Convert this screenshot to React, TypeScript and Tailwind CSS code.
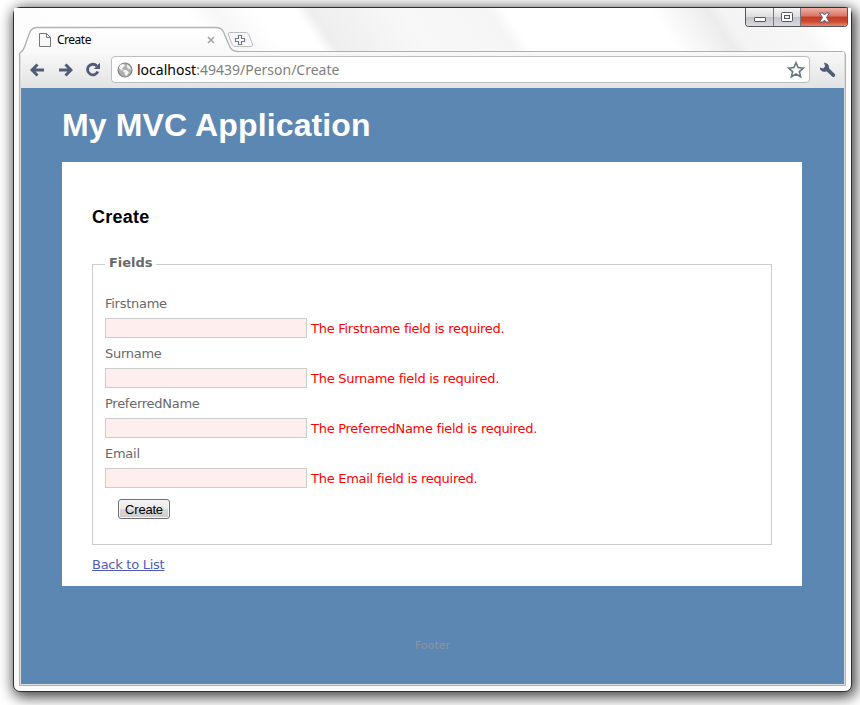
import React from "react";

const names = ["Firstname", "Surname", "PreferredName", "Email"];

function TitleBar() {
  return (
    <div className="flex h-[43px] items-start bg-[linear-gradient(56deg,#fdfdfd_0px,#fff_165px,#f7f7f7_190px,#fff_225px,#fff_256px,#eeeeee_268px,#f8f8f8_344px,#f5f5f5_416px,#fff_430px,#fff_550px,#ececec_598px,#f4f4f4_610px,#f7f7f7_665px,#fff_685px)]">
      <div className="relative mt-[18px] ml-[4px] flex h-[27px] w-[218px] shrink-0 items-center">
        <svg className="absolute top-0 left-0" width="222" height="29" viewBox="0 0 222 29">
          <defs>
            <linearGradient id="tab" x1="0" y1="0" x2="0" y2="1">
              <stop offset="0" stopColor="#ffffff" />
              <stop offset="1" stopColor="#f8f8f8" />
            </linearGradient>
          </defs>
          <path d="M1.5 29V27.5C4 26 5.500 24 6.500 21L11.500 7C13 3 15 1.500 19 1.500H198C202 1.500 204 3 205.500 6L211.500 20C213 24 215 25.500 220 25.500V29Z" fill="url(#tab)" />
          <path d="M1.5 29V27.5C4 26 5.500 24 6.500 21L11.500 7C13 3 15 1.500 19 1.500H198C202 1.500 204 3 205.500 6L211.500 20C213 24 215 25.500 220 25.500" fill="none" stroke="#b2b2b2" strokeWidth="1.4" />
        </svg>
        <svg className="relative ml-[21px]" width="12" height="14" viewBox="0 0 12 14">
          <path d="M.5.5H7.500L11.500 4.500V13.500H.5ZM7.500.5V4.500H11.500" fill="#f8f8f8" stroke="#777" />
        </svg>
        <span className="relative ml-[6px] w-[146px] font-['Noto_Sans',sans-serif] text-[12px] leading-[18px] tracking-[-0.5px] text-black">Create</span>
        <svg className="relative ml-[4px]" width="8" height="8" viewBox="0 0 8 8">
          <path d="M1 1L7 7M7 1L1 7" stroke="#a3a3a3" strokeWidth="1.600" />
        </svg>
      </div>
      <svg className="mt-[23px] -ml-[9px]" width="27" height="18" viewBox="0 0 27 18">
        <path d="M3 1.500H18C20 1.500 21 2 22 4L25.500 13C26 15 25 15.500 24 15.500H9C7 15.500 6 15 5 13L1.500 4C1 2.500 1.500 1.500 3 1.500Z" fill="#f8f8f8" stroke="#bdbdbd" />
        <path d="M11.500 4.500H14.500V7.500H17.500V10.500H14.500V13.500H11.500V10.500H8.500V7.500H11.500Z" fill="white" stroke="#6c7894" strokeWidth="1.200" />
      </svg>
      <div className="ml-auto mr-[3px] flex h-[19px] w-[103px] overflow-hidden rounded-b-[4px] border border-t-0 border-[#55565b]">
        <div className="flex w-[28px] items-center justify-center border-r border-[#77777b] bg-[linear-gradient(#f6f6f6,#dedee0_48%,#c3c3c8_50%,#d9d9e0)]">
          <svg width="12" height="6" viewBox="0 0 12 6" className="mt-[5px]"><rect x=".5" y=".5" width="11" height="4" rx=".5" fill="white" stroke="#555766" /></svg>
        </div>
        <div className="flex w-[27px] items-center justify-center border-r border-[#77777b] bg-[linear-gradient(#f6f6f6,#dedee0_48%,#c3c3c8_50%,#d9d9e0)]">
          <svg width="12" height="10" viewBox="0 0 12 10"><rect x=".5" y=".5" width="11" height="9" rx="1" fill="white" stroke="#555766" /><rect x="3.500" y="3.500" width="5" height="3" fill="#eee" stroke="#555766" /></svg>
        </div>
        <div className="flex flex-1 items-center justify-center bg-[linear-gradient(#f0b0a5,#d97565_45%,#c43d25_50%,#cc4a30_75%,#e58870)]">
          <svg width="13" height="11" viewBox="0 0 13 11"><path d="M1.500 1H5L6.500 3L8 1H11.500L8.500 5.500L11.500 10H8L6.500 8L5 10H1.500L4.500 5.500Z" fill="white" stroke="#66596b" /></svg>
        </div>
      </div>
    </div>
  );
}

function Toolbar() {
  return (
    <div className="flex h-[36px] items-center bg-[linear-gradient(#f8f8f8,#e3e3e3)] pb-px">
      <svg className="ml-[9px]" width="15" height="14" viewBox="0 0 15 14"><path d="M14 7H3M7.500 1.500L2 7L7.500 12.500" fill="none" stroke="#505b76" strokeWidth="2.900" /></svg>
      <svg className="ml-[13px]" width="15" height="14" viewBox="0 0 15 14"><path d="M1 7H12M7.500 1.500L13 7L7.500 12.500" fill="none" stroke="#505b76" strokeWidth="2.900" /></svg>
      <svg className="ml-[12px]" width="16" height="15" viewBox="0 0 16 15"><path d="M11.800 4A5.300 5.300 0 1 0 12.800 9.500" fill="none" stroke="#505b76" strokeWidth="2.800" /><path d="M15 .8V7H8.800Z" fill="#505b76" /></svg>
      <div className="ml-[10px] flex h-[27px] w-[699px] items-center rounded-[4px] border border-[#bdbdc0] bg-white">
        <svg className="ml-[5px]" width="16" height="16" viewBox="0 0 16 16">
          <circle cx="8" cy="8" r="7" fill="#aeaeae" stroke="#858585" strokeWidth="1.200" />
          <path d="M3 3L6.500 1.800L8 3.500L6.500 5.500L5 6L6 8L4.500 8.500L2 6ZM10 2.500L13 4.500L14 8L12 7L10 5.500ZM7 7.500L11 9L12 10.500L9.500 14L8 13L7.500 10.500L6 9Z" fill="#f3f3f3" />
        </svg>
        <span className="mt-px ml-[4px] font-['Noto_Sans',sans-serif] text-[14px] leading-[20px] text-[#808080]"><span className="text-black">localhost</span>:49439/Person/Create</span>
        <svg className="ml-auto mr-[4px]" width="18" height="18" viewBox="0 0 18 18"><path d="M9 1.700L11.100 6.600L16.400 7.100L12.400 10.600L13.600 15.800L9 13L4.400 15.800L5.600 10.600L1.600 7.100L6.900 6.600Z" fill="white" stroke="#6a7488" strokeWidth="1.600" /></svg>
      </div>
      <svg className="ml-[9px]" width="17" height="16" viewBox="0 0 17 16"><path d="M5 .8A4.700 4.700 0 0 1 10 6.300L16 12.200Q16.800 15 13.800 15L7.500 9.300A4.700 4.700 0 0 1 .7 5.500L4.200 6.400L6.200 4.300Z" fill="#505b76" /></svg>
    </div>
  );
}

function Field({ name }: { name: string }) {
  return (
    <div className="h-[50px]">
      <label className="block h-[25px] pt-px leading-[20px] text-[#696969]">{name}</label>
      <div className="flex h-[20px] items-center">
        <input className="h-[20px] w-[202px] border border-[#cccccc] bg-[#ffeeee] px-1 outline-none" />
        <span className="mt-[2px] ml-[4px] whitespace-nowrap text-[#ff0000]">The {name} field is required.</span>
      </div>
    </div>
  );
}

export default function App() {
  return (
    <div className="h-[705px] w-[860px] overflow-hidden bg-white pt-[7px] pl-[13px]">
      <div className="h-[685px] w-[839px] overflow-visible rounded-[7px] border border-[#303030] bg-[#fbfbfb] shadow-[2px_3px_14px_2px_rgba(0,0,0,0.75)]">
        <TitleBar />
        <div className="mx-[5px] h-[635px] rounded-t-[4px] border border-[#b0b0b0] bg-[#dedede] px-px pb-px">
          <Toolbar />
          <main className="flex h-[596px] flex-col bg-[#5c87b2] px-[41px] font-['DejaVu_Sans',sans-serif] text-[13px] tracking-[-0.27px]">
            <h1 className="flex h-[74px] items-center font-['Liberation_Sans',sans-serif] text-[32px] leading-[36px] font-bold tracking-[0.13px] text-white">My MVC Application</h1>
            <section className="h-[424px] w-[740px] bg-white px-[30px] pt-[42px]">
              <h2 className="h-[51px] font-['Liberation_Sans',sans-serif] text-[18px] leading-[26px] font-bold tracking-[0.25px] text-black">Create</h2>
              <fieldset className="h-[290px] border border-[#cccccc] px-[12px]">
                <legend className="h-[18px] px-[4px] leading-[16px] font-bold tracking-[-0.05px] text-[#696969]">Fields</legend>
                <div className="pt-[20px]">
                  {names.map((n) => <Field key={n} name={n} />)}
                  <button className="mt-[6px] ml-[13px] block h-[20px] w-[52px] rounded-[3px] border border-[#707070] bg-[linear-gradient(#f4f4f4,#eaeaea_48%,#d8d8d8_52%,#cdcdcd)] pt-px font-['Liberation_Sans',sans-serif] text-[13px] leading-[18px] tracking-[-0.2px] text-black shadow-[inset_0_0_0_1px_#f6f6f6]">Create</button>
                </div>
              </fieldset>
              <a className="mt-[10px] inline-block leading-[20px] text-[#505abc] underline">Back to List</a>
            </section>
            <footer className="mt-[51px] text-center text-[11px] leading-[18px] tracking-[0.05px] text-[#8a949f]">Footer</footer>
          </main>
        </div>
      </div>
    </div>
  );
}
